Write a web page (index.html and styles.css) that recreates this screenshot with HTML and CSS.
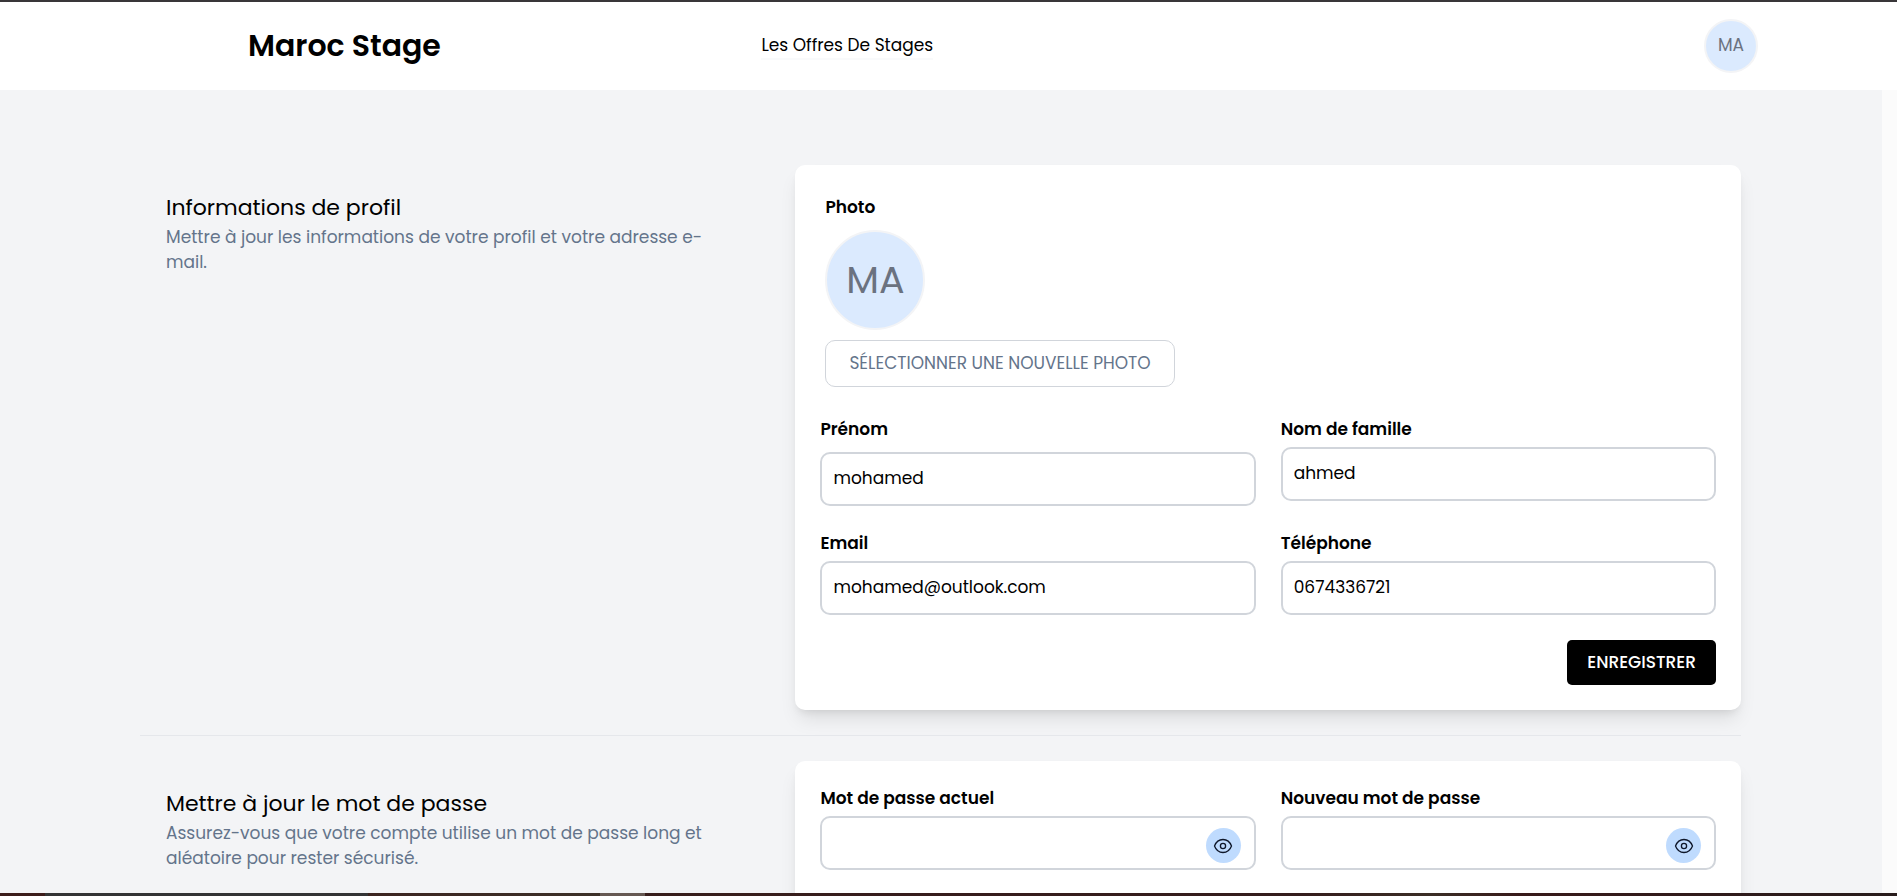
FILE: index.html
```html
<!DOCTYPE html>
<html lang="fr">
<head>
<meta charset="utf-8">
<title>Maroc Stage</title>
<link rel="stylesheet" href="styles.css">
</head>
<body>
<header class="topbar">
  <div class="topbar-inner">
    <a class="brand" href="#">Maroc Stage</a>
    <nav><a class="nav-link" href="#">Les Offres De Stages</a></nav>
    <button class="avatar avatar-small" type="button">MA</button>
  </div>
</header>
<main class="page">
  <div class="sections">
    <section class="section">
      <div class="intro">
        <h2>Informations de profil</h2>
        <p>Mettre à jour les informations de votre profil et votre adresse e-mail.</p>
      </div>
      <form class="card">
        <div class="photo">
          <h3>Photo</h3>
          <div class="avatar avatar-large">MA</div>
          <button class="outline-button" type="button">SÉLECTIONNER UNE NOUVELLE PHOTO</button>
        </div>
        <div class="fields">
          <div class="field field-spaced"><label for="first">Prénom</label><input id="first" type="text" value="mohamed"></div>
          <div class="field"><label for="last">Nom de famille</label><input id="last" type="text" value="ahmed"></div>
          <div class="field"><label for="email">Email</label><input id="email" type="email" value="mohamed@outlook.com"></div>
          <div class="field"><label for="phone">Téléphone</label><input id="phone" type="tel" value="0674336721"></div>
        </div>
        <div class="actions"><button class="save-button" type="submit">ENREGISTRER</button></div>
      </form>
    </section>
    <hr class="divider">
    <section class="section">
      <div class="intro">
        <h2>Mettre à jour le mot de passe</h2>
        <p>Assurez-vous que votre compte utilise un mot de passe long et aléatoire pour rester sécurisé.</p>
      </div>
      <form class="card card-tall">
        <div class="fields">
          <div class="field">
            <label for="current">Mot de passe actuel</label>
            <div class="password"><input id="current" type="password">
              <button class="reveal" type="button" aria-label="Afficher"><svg viewBox="0 0 20 20"><path d="M1.5 10C3 6 6 3.500 10 3.500S17 6 18.500 10C17 14 14 16.500 10 16.500S3 14 1.500 10Z"/><circle cx="10" cy="10" r="2.600"/></svg></button></div>
          </div>
          <div class="field">
            <label for="new">Nouveau mot de passe</label>
            <div class="password"><input id="new" type="password">
              <button class="reveal" type="button" aria-label="Afficher"><svg viewBox="0 0 20 20"><path d="M1.5 10C3 6 6 3.500 10 3.500S17 6 18.500 10C17 14 14 16.500 10 16.500S3 14 1.500 10Z"/><circle cx="10" cy="10" r="2.600"/></svg></button></div>
          </div>
        </div>
      </form>
    </section>
  </div>
</main>
<div class="taskbar"></div>
</body>
</html>
```
FILE: styles.css
```css
* { box-sizing: border-box; }
body {
  display: flex;
  flex-direction: column;
  height: 100vh;
  margin: 0;
  overflow: hidden;
  border-top: 2px solid #393639;
  background: #fff;
  color: #000;
  font: 17px/25px Poppins, Inter, sans-serif;
}
button, input { font: inherit; }
h2, h3, p { margin: 0; }
.topbar { flex: none; background: #fff; }
.topbar-inner {
  display: grid;
  grid-template-columns: 34% 1fr auto;
  align-items: center;
  height: 88px;
  padding: 0 139px 0 248px;
}
.brand { color: #000; font-size: 30px; line-height: 40px; font-weight: 600; text-decoration: none; }
.nav-link { display: inline-block; color: #000; text-decoration: none; border-bottom: 2px solid #f9fafb; }
.avatar {
  display: flex;
  align-items: center;
  justify-content: center;
  padding: 0 0 2px;
  border: 2px solid #f3f4f6;
  border-radius: 50%;
  background: #dbeafe;
  color: #6b7280;
}
.avatar-small { width: 54px; height: 54px; }
.avatar-large { width: 100px; height: 100px; font-size: 38px; }
.page {
  flex: 1;
  min-height: 0;
  overflow: hidden;
  padding: 75px 141px 0 140px;
  background: #f3f4f6;
  border-right: 15px solid #fbfbfb;
}
.section { display: grid; grid-template-columns: 2fr 3fr; gap: 25px; }
.intro { padding: 25px 50px 0 26px; }
.intro h2 { font-size: 22px; line-height: 35px; font-weight: 400; }
.intro p { color: #64748b; }
.card {
  padding: 25px;
  border-radius: 10px;
  background: #fff;
  box-shadow: 0 12px 19px -4px #0000001a, 0 5px 8px -4px #0000001a;
}
.card-tall { padding-bottom: 60px; }
.photo { padding: 5px 5px 0; }
.photo h3 { margin-bottom: 10px; font-size: 17px; line-height: 25px; font-weight: 600; }
.outline-button {
  height: 47px;
  margin-top: 10px;
  padding: 0 23px;
  border: 1px solid #d1d5db;
  border-radius: 10px;
  background: #fff;
  color: #64748b;
}
.fields { display: grid; grid-template-columns: 1fr 1fr; column-gap: 25px; row-gap: 25px; }
.photo + .fields { margin-top: 30px; }
.field { display: flex; flex-direction: column; gap: 5px; }
.field-spaced { gap: 10px; }
.field label { font-weight: 600; }
.field input {
  width: 100%;
  height: 54px;
  padding: 0 11px 3px;
  border: 2px solid #d1d5db;
  border-radius: 10px;
  background: #fff;
  color: #000;
}
.password { position: relative; }
.reveal {
  position: absolute;
  right: 15px;
  top: 12px;
  display: flex;
  align-items: center;
  justify-content: center;
  width: 35px;
  height: 35px;
  padding: 0;
  border: 0;
  border-radius: 50%;
  background: #bfdbfe;
}
.reveal svg { width: 20px; height: 20px; fill: none; stroke: #0f172a; stroke-width: 1.3; }
.actions { display: flex; justify-content: flex-end; margin-top: 25px; }
.save-button { height: 45px; padding: 0 20px; border: 0; border-radius: 5px; background: #000; color: #fff; font-weight: 500; }
.divider { height: 1px; margin: 25px 0; border: 0; background: #e5e7eb; }
.taskbar {
  flex: none;
  height: 3px;
  background: linear-gradient(90deg, #3b1c1a 45px, #333435 45px 368px, #3b2420 368px, #3b3028 600px, #655852 600px 645px, #381e1c 645px, #341c1c 1300px, #3b2e26 1430px, #381a1a 1520px, #281c1c);
}
```
